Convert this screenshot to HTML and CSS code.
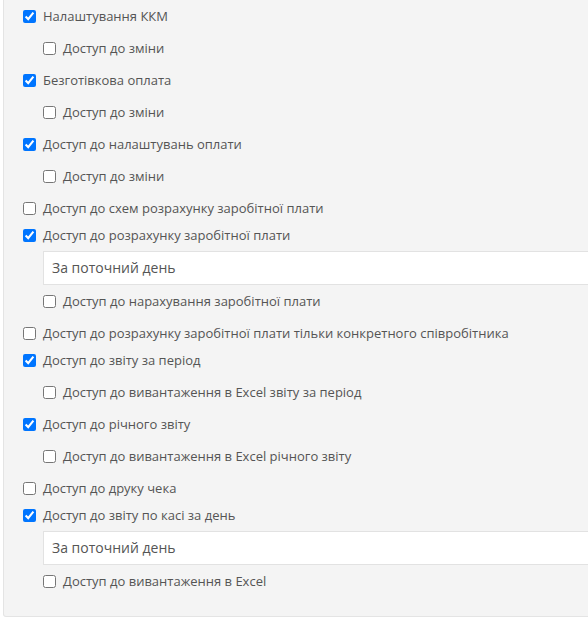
FILE: index.html
```html
<!DOCTYPE html>
<html lang="uk">
<head>
<meta charset="utf-8">
<link rel="stylesheet" href="styles.css">
</head>
<body>
<div class="panel">
  <div class="list">
    <div class="item">
      <label class="row"><input type="checkbox" checked><span>Налаштування ККМ</span></label>
      <div class="children">
        <label class="row"><input type="checkbox"><span>Доступ до зміни</span></label>
      </div>
    </div>
    <div class="item">
      <label class="row"><input type="checkbox" checked><span>Безготівкова оплата</span></label>
      <div class="children">
        <label class="row"><input type="checkbox"><span>Доступ до зміни</span></label>
      </div>
    </div>
    <div class="item">
      <label class="row"><input type="checkbox" checked><span>Доступ до налаштувань оплати</span></label>
      <div class="children">
        <label class="row"><input type="checkbox"><span>Доступ до зміни</span></label>
      </div>
    </div>
    <div class="item">
      <label class="row"><input type="checkbox"><span>Доступ до схем розрахунку заробітної плати</span></label>
    </div>
    <div class="item">
      <label class="row"><input type="checkbox" checked><span>Доступ до розрахунку заробітної плати</span></label>
      <div class="children">
        <div class="select">За поточний день</div>
        <label class="row"><input type="checkbox"><span>Доступ до нарахування заробітної плати</span></label>
      </div>
    </div>
    <div class="item">
      <label class="row"><input type="checkbox"><span>Доступ до розрахунку заробітної плати тільки конкретного співробітника</span></label>
    </div>
    <div class="item">
      <label class="row"><input type="checkbox" checked><span>Доступ до звіту за період</span></label>
      <div class="children">
        <label class="row"><input type="checkbox"><span>Доступ до вивантаження в Excel звіту за період</span></label>
      </div>
    </div>
    <div class="item">
      <label class="row"><input type="checkbox" checked><span>Доступ до річного звіту</span></label>
      <div class="children">
        <label class="row"><input type="checkbox"><span>Доступ до вивантаження в Excel річного звіту</span></label>
      </div>
    </div>
    <div class="item">
      <label class="row"><input type="checkbox"><span>Доступ до друку чека</span></label>
    </div>
    <div class="item">
      <label class="row"><input type="checkbox" checked><span>Доступ до звіту по касі за день</span></label>
      <div class="children">
        <div class="select">За поточний день</div>
        <label class="row"><input type="checkbox"><span>Доступ до вивантаження в Excel</span></label>
      </div>
    </div>
  </div>
</div>
</body>
</html>
```

FILE: styles.css
```css
html, body {
  margin: 0;
  padding: 0;
  background: #ffffff;
  overflow: hidden;
}
body {
  font-family: "Open Sans", "Noto Sans", sans-serif;
  color: #555555;
}
.panel {
  margin-left: 3px;
  width: 700px;
  background: #f4f4f4;
  border: 1px solid #e4e4e4;
  border-top: none;
  border-radius: 0 0 3px 3px;
  padding: 6px 0 20px 19px;
  box-sizing: border-box;
}
.list {
  display: flex;
  flex-direction: column;
  gap: 7px;
}
.item {
  display: flex;
  flex-direction: column;
}
.row {
  display: flex;
  align-items: center;
  height: 20px;
  font-size: 13px;
  line-height: 20px;
  white-space: nowrap;
}
.row input {
  width: 13px;
  height: 13px;
  margin: 0 7px 0 0;
  flex: none;
}
.children {
  display: flex;
  flex-direction: column;
  padding: 5px 0 5px 20px;
}
.children > .row {
  margin-top: 7px;
}
.children > .select + .row {
  margin-top: 6px;
}
.select {
  margin-top: 1px;
  height: 34px;
  box-sizing: border-box;
  background: #ffffff;
  border: 1px solid #e2e2e2;
  padding-left: 8px;
  font-size: 14px;
  line-height: 32px;
  color: #555555;
}
```
